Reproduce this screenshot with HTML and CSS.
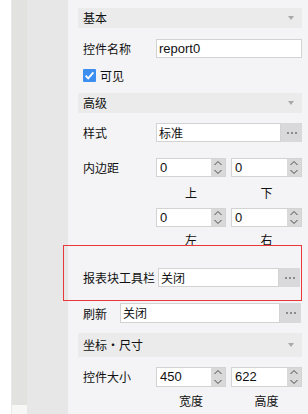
FILE: index.html
```html
<!DOCTYPE html>
<html lang="zh">
<head>
<meta charset="utf-8">
<link rel="stylesheet" href="styles.css">
</head>
<body>
<div class="app">
  <div class="strip-white"></div>
  <div class="strip-a"><div class="strip-a-foot"></div></div>
  <div class="strip-b"></div>
  <div class="panel">
    <div class="section-head"><span>基本</span><i class="caret"></i></div>

    <div class="row row-name">
      <span class="lbl">控件名称</span>
      <div class="field latin">report0</div>
    </div>

    <div class="check-row">
      <span class="checkbox">
        <svg width="13" height="13" viewBox="0 0 13 13"><rect x="0" y="0" width="13" height="13" rx="1" fill="#3c8ff0"/><path d="M2.6 6.6 L5.2 9.3 L10.4 3.4" fill="none" stroke="#fff" stroke-width="1.8"/></svg>
      </span>
      <span class="check-text">可见</span>
    </div>

    <div class="section-head"><span>高级</span><i class="caret"></i></div>

    <div class="row row-style">
      <span class="lbl">样式</span>
      <div class="field">标准</div>
      <div class="dots"><i></i><i></i><i></i></div>
    </div>

    <div class="spin-block pad-block">
      <span class="lbl">内边距</span>
      <div class="spin-grid">
        <div class="spin"><span class="spin-val">0</span><span class="spin-btn"><svg width="14" height="17" viewBox="0 0 14 17"><path d="M3.5 6 L7 2.5 L10.5 6 M3.5 11 L7 14.5 L10.5 11" fill="none" stroke="#4a4a4a" stroke-width="1"/></svg></span></div>
        <div class="spin"><span class="spin-val">0</span><span class="spin-btn"><svg width="14" height="17" viewBox="0 0 14 17"><path d="M3.5 6 L7 2.5 L10.5 6 M3.5 11 L7 14.5 L10.5 11" fill="none" stroke="#4a4a4a" stroke-width="1"/></svg></span></div>
        <div class="cap cap-tall">上</div>
        <div class="cap cap-tall">下</div>
        <div class="spin"><span class="spin-val">0</span><span class="spin-btn"><svg width="14" height="17" viewBox="0 0 14 17"><path d="M3.5 6 L7 2.5 L10.5 6 M3.5 11 L7 14.5 L10.5 11" fill="none" stroke="#4a4a4a" stroke-width="1"/></svg></span></div>
        <div class="spin"><span class="spin-val">0</span><span class="spin-btn"><svg width="14" height="17" viewBox="0 0 14 17"><path d="M3.5 6 L7 2.5 L10.5 6 M3.5 11 L7 14.5 L10.5 11" fill="none" stroke="#4a4a4a" stroke-width="1"/></svg></span></div>
        <div class="cap cap-short">左</div>
        <div class="cap cap-short">右</div>
      </div>
    </div>

    <div class="row row-toolbar">
      <span class="lbl lbl-wide">报表块工具栏</span>
      <div class="field">关闭</div>
      <div class="dots"><i></i><i></i><i></i></div>
    </div>

    <div class="row row-refresh">
      <span class="lbl lbl-short">刷新</span>
      <div class="field">关闭</div>
      <div class="dots"><i></i><i></i><i></i></div>
    </div>

    <div class="section-head section-tall"><span>坐标・尺寸</span><i class="caret"></i></div>

    <div class="spin-block size-block">
      <span class="lbl">控件大小</span>
      <div class="spin-grid">
        <div class="spin"><span class="spin-val">450</span><span class="spin-btn"><svg width="14" height="18" viewBox="0 0 14 18"><path d="M3.5 6 L7 2.5 L10.5 6 M3.5 12 L7 15.5 L10.5 12" fill="none" stroke="#4a4a4a" stroke-width="1"/></svg></span></div>
        <div class="spin"><span class="spin-val">622</span><span class="spin-btn"><svg width="14" height="18" viewBox="0 0 14 18"><path d="M3.5 6 L7 2.5 L10.5 6 M3.5 12 L7 15.5 L10.5 12" fill="none" stroke="#4a4a4a" stroke-width="1"/></svg></span></div>
        <div class="cap cap-size">宽度</div>
        <div class="cap cap-size">高度</div>
      </div>
    </div>

    <div class="highlight"></div>
  </div>
</div>
</body>
</html>
```

FILE: styles.css
```css
* { box-sizing: border-box; }

body {
  margin: 0;
  width: 308px;
  height: 414px;
  overflow: hidden;
  font-family: "Noto Sans CJK SC", "Noto Sans", sans-serif;
  font-size: 12px;
  color: #111;
  background: #f4f4f6;
}

.app {
  display: flex;
  height: 414px;
}

.strip-white { width: 11px; background: #ffffff; }

.strip-a {
  width: 16px;
  background: #e2e2e0;
  display: flex;
  flex-direction: column;
  justify-content: flex-end;
  border-left: 1px solid #e9e9e7;
}
.strip-a-foot { height: 9px; background: #f7f7f5; }

.strip-b { width: 41px; background: #e7e7e7; }

.panel {
  flex: 1;
  background: #f4f4f6;
  padding: 8px 6px 0 10px;
  position: relative;
}

.section-head {
  height: 20px;
  background: #ebebeb;
  display: flex;
  align-items: center;
  justify-content: space-between;
  padding: 0 8px 0 5px;
  line-height: 20px;
}
.section-tall { height: 24px; margin-top: 10px; }

.caret {
  width: 0;
  height: 0;
  border-left: 3px solid transparent;
  border-right: 3px solid transparent;
  border-top: 4px solid #a9a9a9;
}

.row {
  display: flex;
  align-items: center;
  height: 19px;
  padding-left: 5px;
}

.lbl {
  width: 73px;
  flex: none;
  line-height: 19px;
  white-space: nowrap;
}
.lbl-wide { width: 75px; }
.lbl-short { width: 37px; }

.field {
  flex: 1;
  height: 19px;
  background: #fff;
  border: 1px solid #d3d3d3;
  padding-left: 2px;
  line-height: 17px;
  white-space: nowrap;
  overflow: hidden;
}
.latin {
  font-family: "Liberation Sans", Arial, sans-serif;
  font-size: 13px;
}

.dots {
  width: 21px;
  height: 19px;
  flex: none;
  background: #d9d9dc;
  display: flex;
  align-items: center;
  justify-content: center;
  gap: 2px;
}
.dots i {
  width: 2px;
  height: 2px;
  background: #8b8b8b;
}

.row-name { margin-top: 11px; }

.check-row {
  margin-top: 11px;
  height: 13px;
  padding-left: 5px;
  display: flex;
  align-items: center;
  gap: 4px;
}
.checkbox { width: 13px; height: 13px; display: block; }
.checkbox svg { display: block; }
.check-text { line-height: 13px; }

.check-row + .section-head { margin-top: 11px; }

.row-style { margin-top: 10px; }

.spin-block {
  display: flex;
  padding-left: 5px;
}
.spin-block .lbl { line-height: 19px; }
.pad-block { margin-top: 16px; }
.size-block { margin-top: 10px; }
.size-block .lbl { line-height: 20px; }

.spin-grid {
  display: grid;
  grid-template-columns: 70px 71px;
  column-gap: 5px;
}

.spin {
  height: 19px;
  background: #fff;
  border: 1px solid #d3d3d3;
  display: flex;
  align-items: stretch;
}
.size-block .spin { height: 20px; }

.spin-val {
  flex: 1;
  padding-left: 3px;
  font-family: "Liberation Sans", Arial, sans-serif;
  font-size: 13px;
  line-height: 17px;
  color: #111;
}
.size-block .spin-val { line-height: 18px; }

.spin-btn {
  width: 14px;
  background: #d9d9d9;
  display: block;
}
.spin-btn svg { display: block; }

.cap { text-align: center; }
.cap-tall { height: 31px; line-height: 31px; }
.cap-short { height: 26px; line-height: 26px; }
.cap-size { height: 28px; line-height: 28px; }

.row-toolbar { margin-top: 15px; padding-right: 2px; }
.row-refresh { margin-top: 16px; height: 20px; padding-right: 1px; }
.row-refresh .field, .row-refresh .dots { height: 20px; }
.row-refresh .field { line-height: 18px; }

.highlight {
  position: absolute;
  left: -5px;
  top: 245px;
  width: 239px;
  height: 56px;
  border: 1px solid #e8383b;
  pointer-events: none;
}
```
